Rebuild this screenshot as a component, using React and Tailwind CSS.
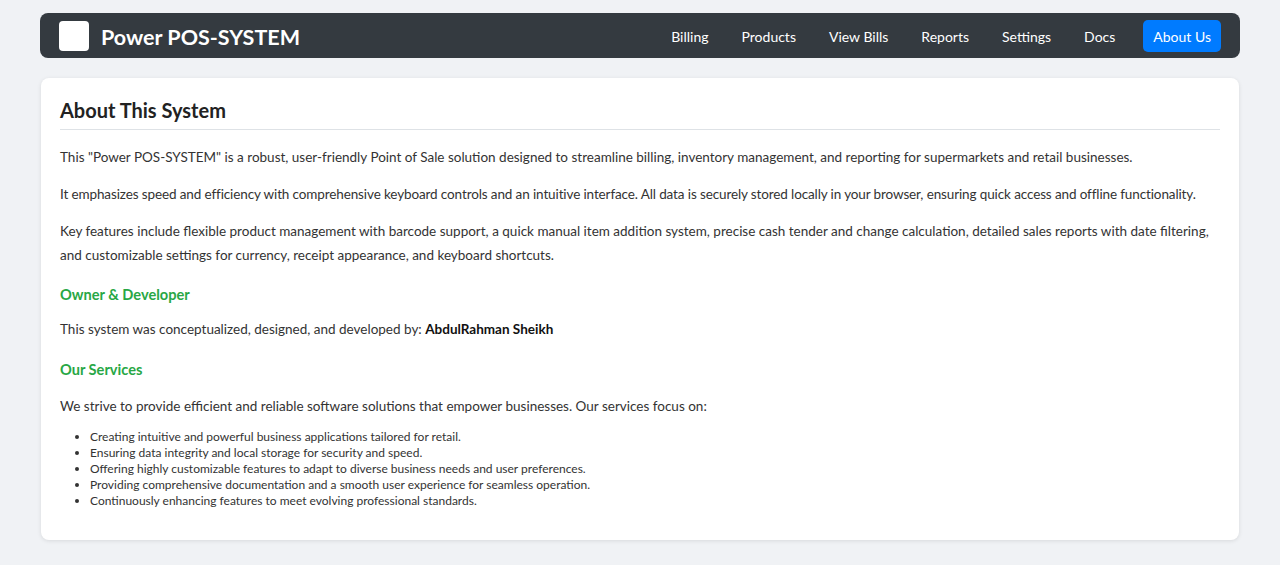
import React from "react";

const navLinks = ["Billing", "Products", "View Bills", "Reports", "Settings", "Docs"];

const services = [
  "Creating intuitive and powerful business applications tailored for retail.",
  "Ensuring data integrity and local storage for security and speed.",
  "Offering highly customizable features to adapt to diverse business needs and user preferences.",
  "Providing comprehensive documentation and a smooth user experience for seamless operation.",
  "Continuously enhancing features to meet evolving professional standards.",
];

export default function App() {
  return (
    <div className="min-h-screen bg-[#f0f2f5] px-10 pt-[13px] pb-6 font-['Lato','Noto_Sans',sans-serif] text-[#333]">
      {/* Top bar */}
      <header className="flex h-[45px] items-center justify-between rounded-lg bg-[#343a40] pl-[19px] pr-[19px]">
        <div className="flex items-center gap-3">
          <div className="h-[30px] w-[30px] rounded-[4px] bg-white"></div>
          <h1 className="mt-[3px] text-[21.5px] font-bold text-white">Power POS-SYSTEM</h1>
        </div>
        <nav className="flex items-center gap-[1px] pt-[1px]">
          {navLinks.map((l) => (
            <a key={l} className="px-[16px] py-[6px] text-[14px] text-white">
              {l}
            </a>
          ))}
          <a className="ml-[11px] flex h-[32px] items-center rounded-[5px] bg-[#007bff] px-[10px] text-[14px] text-white">
            About Us
          </a>
        </nav>
      </header>

      {/* Content card */}
      <main className="mx-[1px] mt-[20px] rounded-lg bg-white px-[19px] pt-[18px] pb-[31px] shadow-[0_1px_4px_rgba(0,0,0,0.1)]">
        <h2 className="border-b border-[#dee2e6] pb-[5px] text-[20px] leading-[28px] font-bold text-[#222]">
          About This System
        </h2>

        <div className="mt-[15px] text-[13.5px] leading-[24px]">
          <p>
            This "Power POS-SYSTEM" is a robust, user-friendly Point of Sale solution designed to streamline billing,
            inventory management, and reporting for supermarkets and retail businesses.
          </p>
          <p className="mt-[13px] tracking-[-0.12px]">
            It emphasizes speed and efficiency with comprehensive keyboard controls and an intuitive interface. All data
            is securely stored locally in your browser, ensuring quick access and offline functionality.
          </p>
          <p className="mt-[13px]">
            Key features include flexible product management with barcode support, a quick manual item addition system,
            precise cash tender and change calculation, detailed sales reports with date filtering,
            <br />
            and customizable settings for currency, receipt appearance, and keyboard shortcuts.
          </p>

          <h3 className="mt-[18px] text-[14.6px] leading-[20px] font-bold text-[#28a745]">Owner &amp; Developer</h3>
          <p className="mt-[12px]">
            This system was conceptualized, designed, and developed by:{" "}
            <strong className="text-[#111]">AbdulRahman Sheikh</strong>
          </p>

          <h3 className="mt-[19px] text-[14.6px] leading-[20px] font-bold text-[#28a745]">Our Services</h3>
          <p className="mt-[14px]">
            We strive to provide efficient and reliable software solutions that empower businesses. Our services focus
            on:
          </p>
          <ul className="mt-[11px] list-disc pl-[30px] text-[12px] leading-[16px]">
            {services.map((s) => (
              <li key={s}>{s}</li>
            ))}
          </ul>
        </div>
      </main>
    </div>
  );
}
